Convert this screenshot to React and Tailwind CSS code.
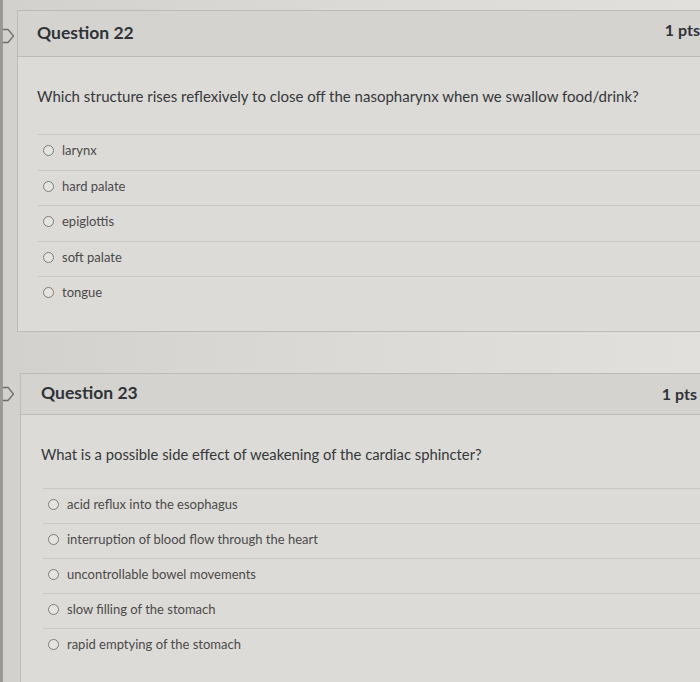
import React from 'react';

const Flag = ({ className }) => (
  <svg className={className} width="14" height="16" viewBox="0 0 14 16" fill="none">
    <path d="M-2 1.5 H7 L12.5 8 L7 14.5 H-2" stroke="#6f6d6a" strokeWidth="1.3" />
  </svg>
);

const Radio = () => (
  <span className="inline-block w-[11px] h-[11px] rounded-full border border-[#7d7b78] bg-[#e6e4e0] shrink-0" />
);

const Question = ({ number, text, answers, rowH, style }) => (
  <div className={`relative border border-r-0 border-[#bdbbb7] ${style.card}`}>
    <Flag className={`absolute ${style.flag}`} />
    <div className={`flex justify-between bg-[#d5d3cf] border-b border-[#bdbbb7] ${style.header}`}>
      <h2 className="text-[17.5px] font-bold text-[#2f3338] self-center">Question {number}</h2>
      <span className={`text-[16px] font-bold text-[#2f3338] whitespace-nowrap ${style.pts}`}>1 pts</span>
    </div>
    <div className={`bg-[#dddbd7] ${style.body}`}>
      <p className={`leading-5 text-[#35383b] ${style.text}`}>{text}</p>
      <ul className={style.list}>
        {answers.map((a) => (
          <li key={a} className={`flex items-center gap-[8px] border-t border-[#c9c7c3] ${rowH}`}>
            <Radio />
            <span className="text-[13px] text-[#4a4a4a]">{a}</span>
          </li>
        ))}
      </ul>
    </div>
  </div>
);

export default function App() {
  return (
    <div
      className="w-[700px] h-[682px] overflow-hidden bg-gradient-to-r from-[#d3d1cd] via-[#dcdad6] to-[#e2e0dc] border-l-[3px] border-[#9b9995] pt-[10px]"
      style={{ fontFamily: 'Lato, "Open Sans", sans-serif' }}
    >
      <Question
        number={22}
        text="Which structure rises reflexively to close off the nasopharynx when we swallow food/drink?"
        answers={['larynx', 'hard palate', 'epiglottis', 'soft palate', 'tongue']}
        rowH="h-[35.5px] pb-[3px] pl-[5px]"
        style={{
          card: 'ml-[14px]',
          flag: 'left-[-17px] top-[17px]',
          header: 'h-[46px] pl-[19px] pr-0',
          pts: 'pt-[7px]',
          text: 'text-[15px]',
          body: 'pl-[19px] pt-[29px] pb-[19px]',
          list: 'mt-[28px] ml-[1px]',
        }}
      />
      <Question
        number={23}
        text="What is a possible side effect of weakening of the cardiac sphincter?"
        answers={[
          'acid reflux into the esophagus',
          'interruption of blood flow through the heart',
          'uncontrollable bowel movements',
          'slow filling of the stomach',
          'rapid emptying of the stomach',
        ]}
        rowH="h-[35px] pb-[2px] pl-[5px]"
        style={{
          card: 'ml-[17px] mt-[41px]',
          flag: 'left-[-20px] top-[12px]',
          header: 'h-[41px] pl-[20px] pr-[3px] items-center',
          pts: 'self-center',
          text: 'text-[14.8px]',
          body: 'pl-[20px] pt-[29px] pb-[40px]',
          list: 'mt-[24px] ml-[2px]',
        }}
      />
    </div>
  );
}
